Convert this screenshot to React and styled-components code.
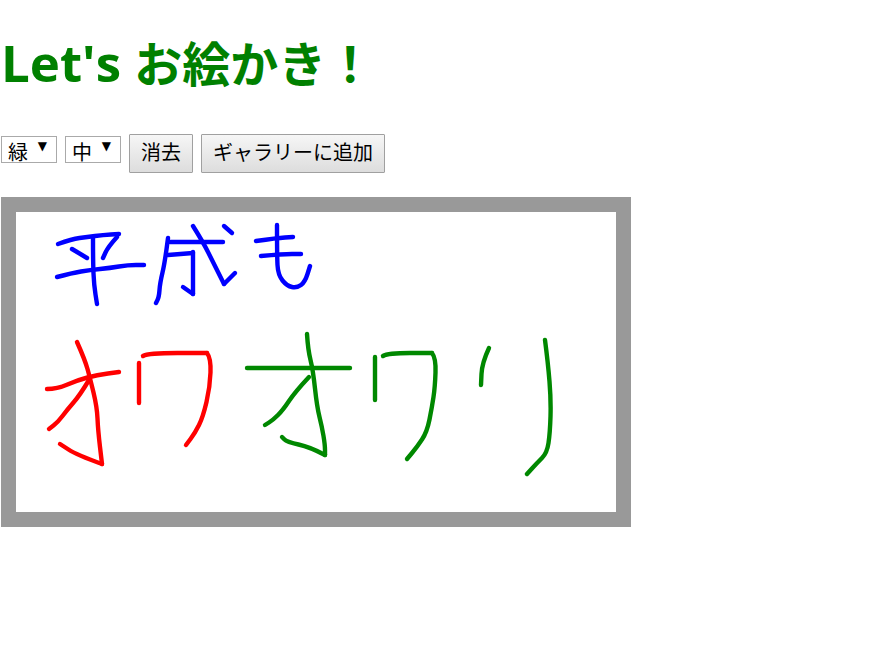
import React from "react";
import styled, { createGlobalStyle } from "styled-components";

const GlobalStyle = createGlobalStyle`
  html, body {
    margin: 0;
    background: #fff;
    color: #000;
    font-family: "Noto Sans CJK JP", "Open Sans", sans-serif;
  }
`;

const Page = styled.div`
  padding: 1px;
`;

const Title = styled.h1`
  margin: 0;
  padding-top: 30px;
  height: 100px;
  box-sizing: border-box;
  font-size: 48px;
  line-height: 60px;
  font-weight: 700;
  color: green;
  font-family: "Noto Sans CJK JP", sans-serif;
`;

const Latin = styled.span`
  font-family: "Open Sans", sans-serif;
  font-size: 51px;
`;

const Toolbar = styled.div`
  display: flex;
  align-items: flex-start;
  gap: 8px;
  height: 63px;
  padding-top: 33px;
`;

const SelectBox = styled.div`
  position: relative;
  margin-top: 2px;

  &::after {
    content: "▼";
    position: absolute;
    top: 3px;
    right: 10px;
    font-size: 12px;
    line-height: 14px;
    font-family: "DejaVu Sans", sans-serif;
    pointer-events: none;
  }
`;

const Select = styled.select`
  display: block;
  appearance: none;
  width: 56px;
  height: 27px;
  margin: 0;
  padding: 3px 0 0 6px;
  background: #fff;
  border: 1px solid #aaa;
  border-radius: 0;
  color: #000;
  font-size: 20px;
  line-height: 24px;
  font-family: "Noto Sans CJK JP", sans-serif;
`;

const Button = styled.button`
  height: 39px;
  width: ${(p) => p.$width}px;
  padding: 0 0 4px;
  border: 1px solid #a0a0a0;
  border-radius: 1px;
  background: linear-gradient(#f6f6f6, #dddddd);
  color: #000;
  font-size: 20px;
  font-family: "Noto Sans CJK JP", sans-serif;
`;

const Canvas = styled.svg`
  display: block;
  width: 600px;
  height: 300px;
  border: 15px solid #999;
  background: #fff;
`;

const Ink = styled.g`
  fill: none;
  stroke-width: 4.4;
  stroke-linecap: round;
  stroke-linejoin: round;
  filter: blur(0.35px);
`;

const strokes = [
  // 平成も
  ["#00f", "42,32 56,27 71,25 87,23 103,22"],
  ["#00f", "56,37 71,46"],
  ["#00f", "101,25 92,35 87,46"],
  ["#00f", "41,65 56,61 74,58 94,56 112,53 128,53"],
  ["#00f", "77,26 77,50 78,73 81,92"],
  ["#00f", "152,26 149,50 144,71 143,85 140,91"],
  ["#00f", "154,30 181,30 207,30"],
  ["#00f", "177,14 187,30 197,50 208,72"],
  ["#00f", "208,72 219,61"],
  ["#00f", "152,43 177,41"],
  ["#00f", "177,40 177,62 177,82"],
  ["#00f", "177,82 167,75"],
  ["#00f", "208,14 216,21"],
  ["#00f", "261,13 261,43 262,63 271,74 281,76 289,70 294,54"],
  ["#00f", "240,29 261,26 277,25"],
  ["#00f", "245,44 267,42 285,42"],
  // オワ
  ["#f00", "61,130 69,148 74,166 81,195 82,218 86,252"],
  ["#f00", "86,252 61,243 44,232"],
  ["#f00", "31,177 41,177 62,168 81,163 103,160"],
  ["#f00", "73,168 64,183 51,198 42,210 33,217"],
  ["#f00", "123,151 123,191"],
  ["#f00", "127,144 132,141 191,141"],
  ["#f00", "191,141 195,146 194,175 187,205 179,221 170,233"],
  // オワリ
  ["#080", "291,122 292,138 297,158 301,195 306,215 309,233 309,243"],
  ["#080", "309,243 294,235 271,230 266,225"],
  ["#080", "231,156 334,156"],
  ["#080", "293,165 279,180 267,198 257,208 249,213"],
  ["#080", "359,145 359,188"],
  ["#080", "367,144 372,141 416,141"],
  ["#080", "416,141 420,146 419,175 416,195 411,220 401,235 391,247"],
  ["#080", "473,136 466,151 465,173"],
  ["#080", "529,128 532,151 535,188 534,221 531,241 521,251 511,262"],
];

// smooths a hand drawn stroke through the midpoints of its segments
const toPath = (points) => {
  const pts = points.split(" ").map((p) => p.split(",").map(Number));
  let d = `M${pts[0]}`;
  for (let i = 1; i < pts.length - 1; i++) {
    const mx = (pts[i][0] + pts[i + 1][0]) / 2;
    const my = (pts[i][1] + pts[i + 1][1]) / 2;
    d += ` Q${pts[i]} ${mx},${my}`;
  }
  return `${d} L${pts[pts.length - 1]}`;
};

const App = () => {
  return (
    <Page>
      <GlobalStyle />
      <Title>
        <Latin>Let's </Latin>お絵かき！
      </Title>
      <Toolbar>
        <SelectBox>
          <Select defaultValue="green">
            <option value="green">緑</option>
            <option value="red">赤</option>
            <option value="blue">青</option>
          </Select>
        </SelectBox>
        <SelectBox>
          <Select defaultValue="mid">
            <option value="mid">中</option>
            <option value="small">小</option>
            <option value="large">大</option>
          </Select>
        </SelectBox>
        <Button $width={64}>消去</Button>
        <Button $width={184}>ギャラリーに追加</Button>
      </Toolbar>
      <Canvas viewBox="0 0 600 300">
        <Ink>
          {strokes.map(([color, points]) => (
            <path key={points} d={toPath(points)} stroke={color} />
          ))}
        </Ink>
      </Canvas>
    </Page>
  );
};

export default App;
